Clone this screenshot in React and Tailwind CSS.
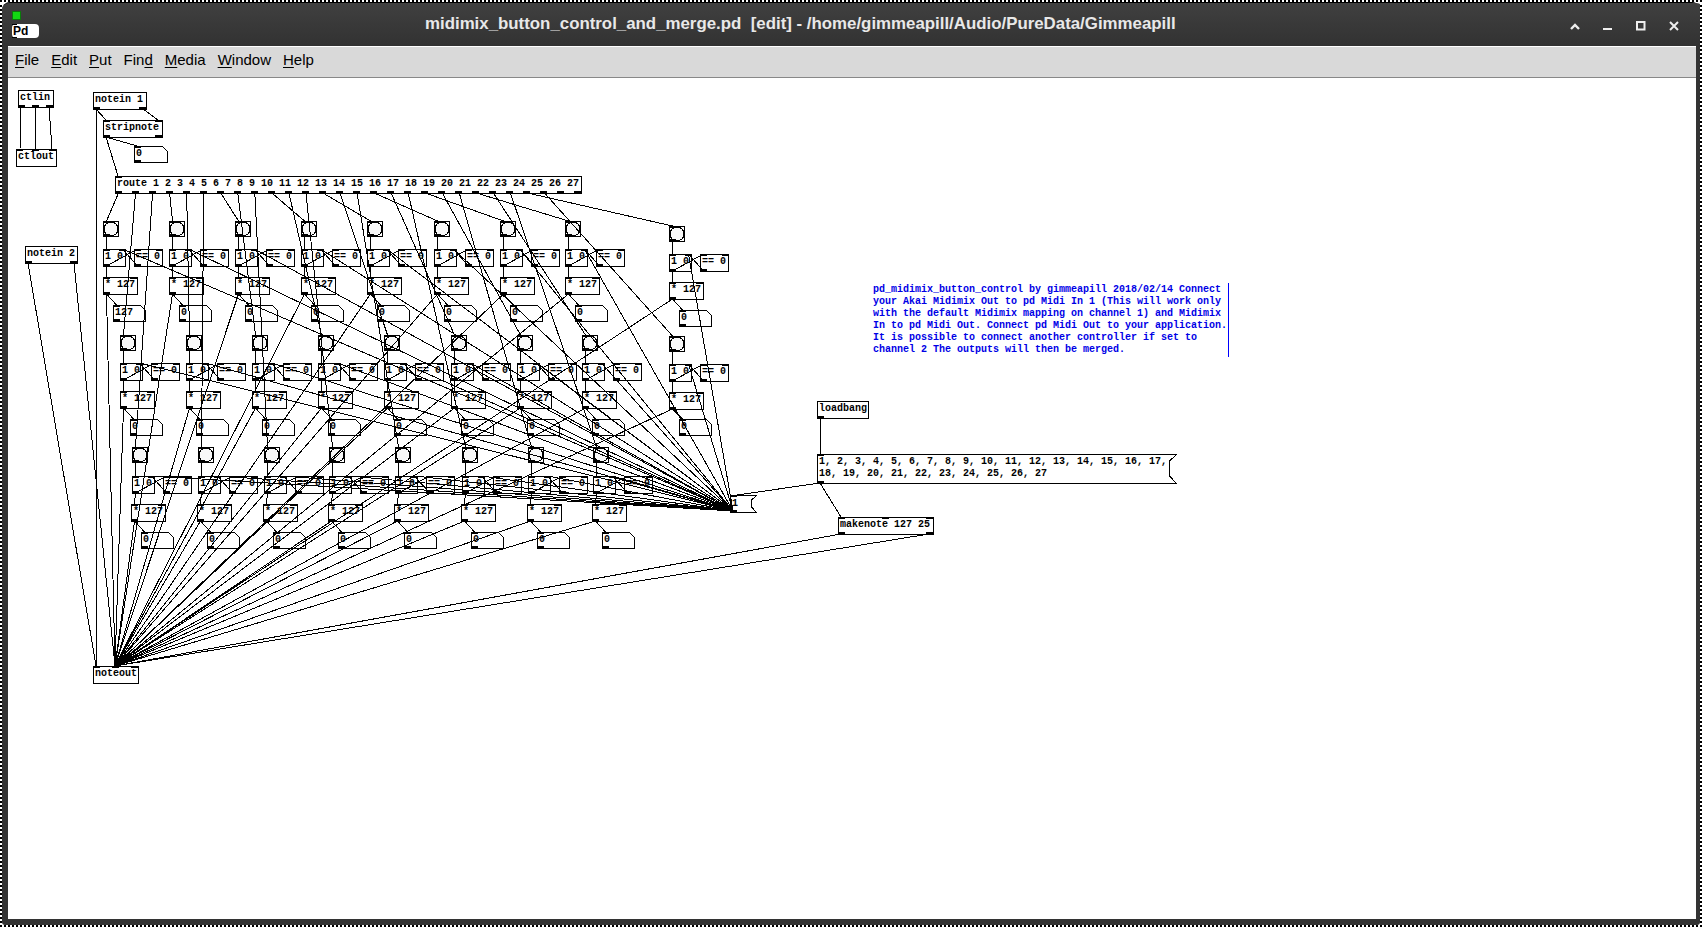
const OX = 8;
const OY = 78;

const colsA = [103, 169, 235, 301, 367, 434, 500, 565];
const colsB = [120, 186, 252, 318, 384, 451, 517, 582];
const colsC = [132, 198, 264, 329, 395, 462, 528, 593];

// route outlets sit every 17px along the top box
const routeOut = (i) => 118.5 + i * 17.04;
const routeText =
  "route 1 2 3 4 5 6 7 8 9 10 11 12 13 14 15 16 17 18 19 20 21 22 23 24 25 26 27";

const FAN = [733, 511];
const NOTEOUT = [115, 666];

// one bang -> sel -> * 127 -> number strip
const strip = (b, rowY, offs, route, numText = "0") => ({
  bang: [b, rowY.bang],
  sel: [b, rowY.sel],
  eq: [b + 31, rowY.sel],
  times: [b + offs.times, rowY.times],
  num: [b + offs.num, rowY.num],
  route,
  numText,
});

const strips = [
  ...colsA.map((b, i) =>
    strip(b, { bang: 221, sel: 249, times: 277, num: 305 }, { times: 0, num: 10 }, i * 3, i === 0 ? "127" : "0")
  ),
  strip(669, { bang: 226, sel: 254, times: 282, num: 310 }, { times: 0, num: 10 }, 24),
  ...colsB.map((b, i) =>
    strip(b, { bang: 335, sel: 363, times: 391, num: 419 }, { times: 0, num: 10 }, i * 3 + 1)
  ),
  strip(669, { bang: 336, sel: 364, times: 392, num: 419 }, { times: 0, num: 10 }, 25),
  ...colsC.map((b, i) =>
    strip(b, { bang: 447, sel: 476, times: 504, num: 532 }, { times: -1, num: 9 }, i * 3 + 2)
  ),
];

const plainBoxes = [
  { x: 18, y: 90, w: 35, h: 17, text: "ctlin", ins: [], outs: [0, 14, 28] },
  { x: 16, y: 149, w: 40, h: 17, text: "ctlout", ins: [0, 16, 33], outs: [] },
  { x: 93, y: 92, w: 53, h: 17, text: "notein 1", ins: [], outs: [0, 46] },
  { x: 103, y: 120, w: 59, h: 17, text: "stripnote", ins: [0, 52], outs: [0, 52] },
  { x: 25, y: 246, w: 52, h: 17, text: "notein 2", ins: [], outs: [0, 45] },
  { x: 93, y: 666, w: 45, h: 17, text: "noteout", ins: [0, 19, 38], outs: [] },
  { x: 817, y: 401, w: 51, h: 17, text: "loadbang", ins: [], outs: [0] },
  { x: 838, y: 517, w: 95, h: 17, text: "makenote 127 25", ins: [0, 44, 88], outs: [0, 88] },
  { x: 115, y: 176, w: 466, h: 17, text: routeText, ins: [0], outs: Array.from({ length: 28 }, (_, i) => i * 17) },
];

const wires = [
  [21, 107, 20, 149],
  [35, 107, 36, 149],
  [49, 107, 52, 149],
  [96, 109, 106, 120],
  [143, 109, 158, 120],
  [96, 109, 96, 666],
  [106, 137, 118, 176],
  [106, 137, 137, 146],
  [28, 263, 96, 666],
  [74, 263, 115, 666],
  [820, 418, 820, 454],
  [820, 483, 737, 495],
  [820, 483, 841, 517],
  [841, 534, ...NOTEOUT],
  [929, 534, ...NOTEOUT],
];

strips.forEach((s) => {
  const bx = s.bang[0] + 3.5;
  const sx = s.sel[0] + 3.5;
  const sr = s.sel[0] + 19.5;
  const ex = s.eq[0] + 3.5;
  const tx = s.times[0] + 3.5;
  wires.push([routeOut(s.route), 193, bx, s.bang[1]]);
  wires.push([bx, s.bang[1] + 15, sx, s.sel[1]]);
  wires.push([sx, s.sel[1] + 17, tx, s.times[1]]);
  wires.push([sx, s.sel[1] + 17, ex, s.sel[1]]);
  wires.push([ex, s.sel[1] + 17, sr, s.sel[1]]);
  wires.push([tx, s.times[1] + 17, s.num[0] + 3.5, s.num[1]]);
  wires.push([tx, s.times[1] + 17, ...NOTEOUT]);
  wires.push([...FAN, sr, s.sel[1]]);
});

const Label = ({ x, y, children }) => (
  <div
    className="absolute whitespace-pre text-[10px] leading-[12px] font-bold text-black"
    style={{ left: x - OX, top: y - OY }}
  >
    {children}
  </div>
);

// outline + black inlet/outlet tabs of a text object
const Box = ({ x, y, w, h, ins = [], outs = [] }) => (
  <g>
    <rect x={x + 0.5} y={y + 0.5} width={w} height={h} fill="#fff" stroke="#000" />
    {ins.map((o, i) => (
      <rect key={i} x={x + o} y={y} width={7} height={2} fill="#000" />
    ))}
    {outs.map((o, i) => (
      <rect key={i} x={x + o} y={y + h - 2} width={7} height={3} fill="#000" />
    ))}
  </g>
);

const NumBox = ({ x, y, w = 32, h = 16 }) => (
  <g>
    <path
      d={`M${x + 0.5} ${y + 0.5} H${x + w - 4.5} L${x + w + 0.5} ${y + 5.5} V${y + h + 0.5} H${x + 0.5} Z`}
      fill="#fff"
      stroke="#000"
    />
    <rect x={x} y={y} width={7} height={2} fill="#000" />
    <rect x={x} y={y + h - 2} width={7} height={3} fill="#000" />
  </g>
);

// message box: flag shaped notch on its right edge
const MsgBox = ({ x, y, w, h, notch = 7 }) => (
  <g>
    <path
      d={`M${x + 0.5} ${y + 0.5} H${x + w + 0.5} L${x + w - notch + 0.5} ${y + notch} V${y + h - notch} L${x + w + 0.5} ${y + h + 0.5} H${x + 0.5} Z`}
      fill="#fff"
      stroke="#000"
    />
    <rect x={x} y={y} width={7} height={2} fill="#000" />
    <rect x={x} y={y + h - 2} width={7} height={3} fill="#000" />
  </g>
);

const Bang = ({ x, y }) => (
  <g>
    <rect x={x + 0.5} y={y + 0.5} width={15} height={15} fill="#fff" stroke="#000" />
    <circle cx={x + 8} cy={y + 8} r={7} fill="#f8f8f8" stroke="#000" />
    <rect x={x} y={y} width={7} height={2} fill="#000" />
    <rect x={x} y={y + 13} width={7} height={3} fill="#000" />
  </g>
);

const Patch = () => (
  <div className="relative flex-1 bg-white overflow-hidden font-['Liberation_Mono',monospace]">
    <svg className="absolute inset-0" width="1686" height="842" viewBox={`${OX} ${OY} 1686 842`} shapeRendering="crispEdges">
      {plainBoxes.map((b) => (
        <Box key={b.text} {...b} />
      ))}
      <NumBox x={134} y={146} w={33} />
      <MsgBox x={817} y={454} w={359} h={29} />
      <MsgBox x={730} y={495} w={26} h={17} notch={5} />
      {strips.map((s, i) => (
        <g key={i}>
          <Bang x={s.bang[0]} y={s.bang[1]} />
          <Box x={s.sel[0]} y={s.sel[1]} w={22} h={17} ins={[0, 16]} outs={[0]} />
          <Box x={s.eq[0]} y={s.eq[1]} w={28} h={17} ins={[0, 22]} outs={[0]} />
          <Box x={s.times[0]} y={s.times[1]} w={34} h={17} ins={[0, 27]} outs={[0]} />
          <NumBox x={s.num[0]} y={s.num[1]} />
        </g>
      ))}
    </svg>

    {plainBoxes.map((b) => (
      <Label key={b.text} x={b.x + 2} y={b.y + 2}>
        {b.text}
      </Label>
    ))}
    <Label x={136} y={148}>0</Label>
    <Label x={732} y={498}>1</Label>
    <Label x={819} y={456}>{"1, 2, 3, 4, 5, 6, 7, 8, 9, 10, 11, 12, 13, 14, 15, 16, 17,\n18, 19, 20, 21, 22, 23, 24, 25, 26, 27"}</Label>
    {strips.map((s, i) => (
      <div key={i}>
        <Label x={s.sel[0] + 2} y={s.sel[1] + 2}>1 0</Label>
        <Label x={s.eq[0] + 2} y={s.eq[1] + 2}>== 0</Label>
        <Label x={s.times[0] + 2} y={s.times[1] + 2}>* 127</Label>
        <Label x={s.num[0] + 2} y={s.num[1] + 2}>{s.numText}</Label>
      </div>
    ))}

    <div
      className="absolute whitespace-pre text-[10px] leading-[12px] font-bold text-[#0000e6] border-r border-[#0000ff] h-[74px] pt-[1px] w-[356px]"
      style={{ left: 873 - OX, top: 283 - OY }}
    >
      {"pd_midimix_button_control by gimmeapill 2018/02/14 Connect\nyour Akai Midimix Out to pd Midi In 1 (This will work only\nwith the default Midimix mapping on channel 1) and Midimix\nIn to pd Midi Out. Connect pd Midi Out to your application.\nIt is possible to connect another controller if set to\nchannel 2 The outputs will then be merged."}
    </div>

    {/* patch cords go over the boxes */}
    <svg className="absolute inset-0 pointer-events-none" width="1686" height="842" viewBox={`${OX} ${OY} 1686 842`} shapeRendering="crispEdges">
      {wires.map(([x1, y1, x2, y2], i) => (
        <line key={i} x1={x1} y1={y1} x2={x2} y2={y2} stroke="#000" strokeWidth="1" />
      ))}
    </svg>
  </div>
);

const MenuItem = ({ before = "", under, after = "" }) => (
  <span className="px-[6px]">
    {before}
    <span className="underline underline-offset-2">{under}</span>
    {after}
  </span>
);

const WinIcon = ({ children }) => (
  <svg width="10" height="10" viewBox="0 0 10 10" fill="none" stroke="#eeeeee" strokeWidth="2">
    {children}
  </svg>
);

const App = () => {
  return (
    <div className="w-[1702px] h-[927px] bg-white border-2 border-dotted border-black overflow-hidden">
      <div className="h-full flex flex-col bg-[#333333] rounded-t-lg rounded-b-[3px] border-t border-black pl-[6px] pr-[2px] pb-[6px]">
        {/* Title bar */}
        <div className="h-[43px] -mx-[6px] flex items-center bg-gradient-to-b from-[#404040] to-[#323232] rounded-t-lg">
          <div className="ml-[10px] w-[27px] flex flex-col gap-[4px] self-start pt-[8px]">
            <div className="w-[9px] h-[9px] bg-[#12d912] border border-[#0b7a0b]"></div>
            <div className="relative w-[27px] h-[14px] bg-white rounded-sm text-black text-[12px] leading-[14px] font-bold pl-[1px] font-['Liberation_Sans',sans-serif]">
              <span className="absolute left-0 top-0 w-[5px] h-[1px] bg-black"></span>
              <span className="absolute left-0 bottom-0 w-[5px] h-[1px] bg-black"></span>
              Pd
            </div>
          </div>
          <div className="ml-[386px] pb-[1px] whitespace-pre text-[#e8e8e8] text-[16.85px] font-bold font-['Liberation_Sans',sans-serif]">
            midimix_button_control_and_merge.pd  [edit] - /home/gimmeapill/Audio/PureData/Gimmeapill
          </div>
          <div className="ml-auto mr-[25px] flex items-center gap-[23px] pt-[3px]">
            <WinIcon>
              <path d="M1 8 L5 4 L9 8" strokeWidth="2.4" />
            </WinIcon>
            <WinIcon>
              <path d="M0 8 H9" />
            </WinIcon>
            <WinIcon>
              <rect x="1" y="1" width="7.5" height="7.5" />
            </WinIcon>
            <WinIcon>
              <path d="M1 1 L9 9 M9 1 L1 9" />
            </WinIcon>
          </div>
        </div>

        {/* Pd window */}
        <div className="flex-1 flex flex-col mr-[2px] min-h-0">
          <div className="h-[32px] bg-[#d9d9d9] border-t border-white border-b border-b-[#888888] flex items-center pl-[1px] pb-[3px] text-[15px] text-black font-['Liberation_Sans',sans-serif]">
            <MenuItem under="F" after="ile" />
            <MenuItem under="E" after="dit" />
            <MenuItem under="P" after="ut" />
            <MenuItem before="Fin" under="d" />
            <MenuItem under="M" after="edia" />
            <MenuItem under="W" after="indow" />
            <MenuItem under="H" after="elp" />
          </div>
          <Patch />
        </div>
      </div>
    </div>
  );
};

export default App;
